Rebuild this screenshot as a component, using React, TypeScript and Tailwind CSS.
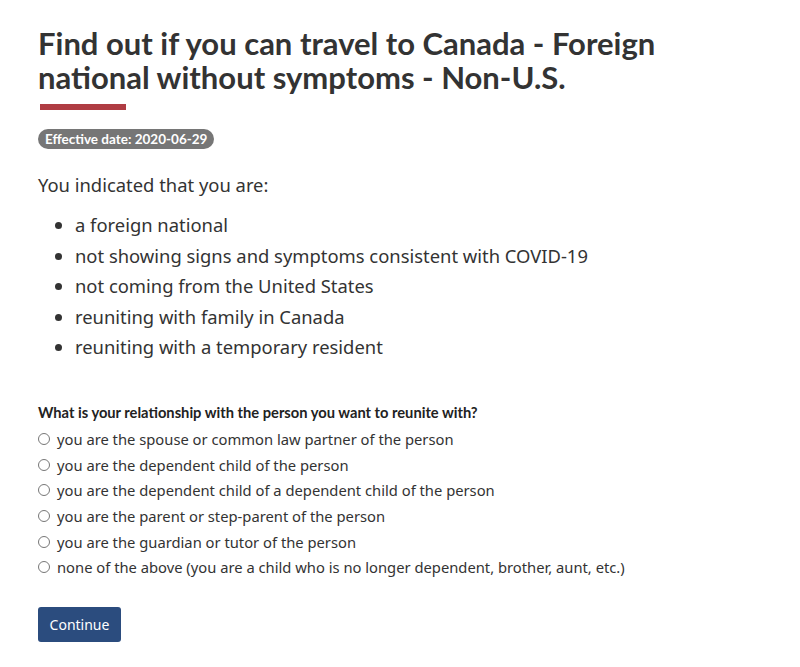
import React from "react";

const bullets = [
  "a foreign national",
  "not showing signs and symptoms consistent with COVID-19",
  "not coming from the United States",
  "reuniting with family in Canada",
  "reuniting with a temporary resident",
];

const options = [
  "you are the spouse or common law partner of the person",
  "you are the dependent child of the person",
  "you are the dependent child of a dependent child of the person",
  "you are the parent or step-parent of the person",
  "you are the guardian or tutor of the person",
  "none of the above (you are a child who is no longer dependent, brother, aunt, etc.)",
];

export default function App() {
  return (
    <div className="w-[800px] h-[667px] bg-white text-[#333] pl-[38px] pt-[26px]" style={{ fontFamily: '"Noto Sans", sans-serif' }}>
      <h1 className="text-[31px] leading-[34px] font-bold text-[#333] w-[700px]" style={{ fontFamily: "Lato, sans-serif" }}>
        Find out if you can travel to Canada - Foreign national without symptoms - Non-U.S.
      </h1>
      <div className="mt-[10px] ml-[2px] w-[86px] h-[6px] bg-[#af3c43]" />
      <div className="mt-[19px] flex">
        <span className="inline-flex items-center h-[20px] px-[7px] rounded-full bg-[#767676] text-white text-[13.5px] font-bold" style={{ fontFamily: "Lato, sans-serif" }}>
          Effective date: 2020-06-29
        </span>
      </div>
      <p className="mt-[24px] text-[18.4px] leading-[24px]">You indicated that you are:</p>
      <ul className="mt-[13px] pl-[37px] list-disc text-[18.4px] leading-[30.5px]">
        {bullets.map((b) => (
          <li key={b}>{b}</li>
        ))}
      </ul>
      <p className="mt-[39px] text-[14.7px] leading-[20px] font-bold text-[#222]" style={{ fontFamily: "Lato, sans-serif" }}>
        What is your relationship with the person you want to reunite with?
      </p>
      <div className="mt-[5px] flex flex-col">
        {options.map((o) => (
          <label key={o} className="flex items-center h-[25.6px] text-[14.75px]">
            <span className="w-[12px] h-[12px] rounded-full border border-[#777] mr-[7px] shrink-0" />
            {o}
          </label>
        ))}
      </div>
      <button className="mt-[27px] w-[83px] h-[35px] rounded-[3px] bg-[#2b4c7e] text-white text-[14px]">
        Continue
      </button>
    </div>
  );
}
